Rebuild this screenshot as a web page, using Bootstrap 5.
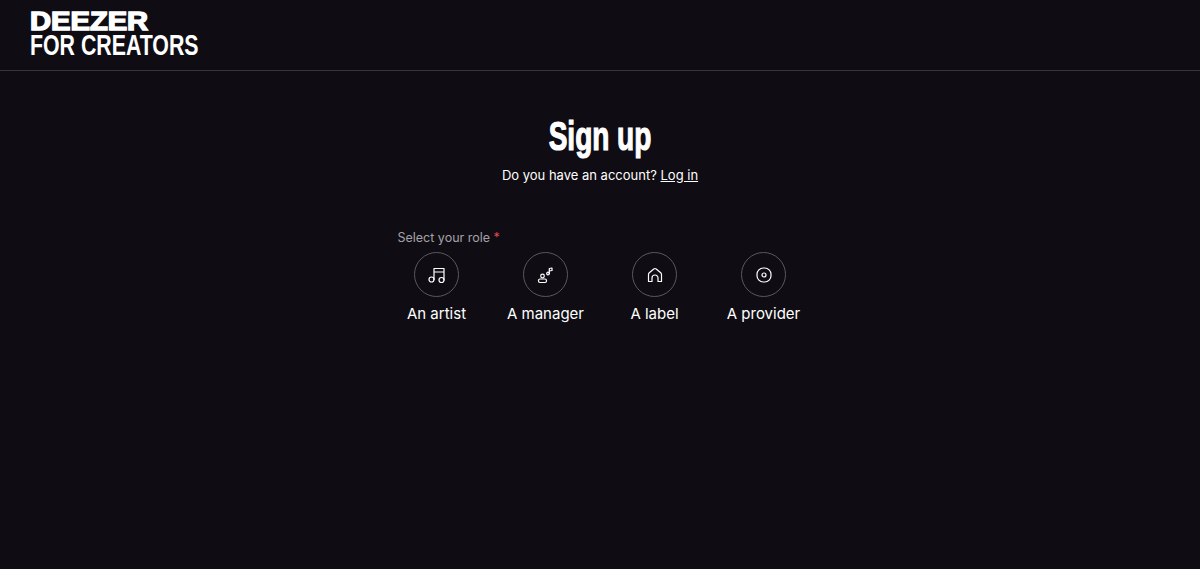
<!DOCTYPE html>
<html lang="en">
<head>
  <meta charset="UTF-8">
  <meta name="viewport" content="width=device-width, initial-scale=1.0">
  <title>Deezer for Creators - Sign up</title>
  <link href="https://cdn.jsdelivr.net/npm/bootstrap@5.3.3/dist/css/bootstrap.min.css" rel="stylesheet">
  <style>
    body {
      background: #0f0d13;
      color: #fff;
      font-family: Inter, "Liberation Sans", sans-serif;
      min-height: 569px;
    }
    .site-head {
      height: 71px;
      padding: 10px 30px 0;
      border-bottom: 1px solid #38363c;
    }
    .logo-top, .logo-bottom {
      display: block;
      width: fit-content;
      transform-origin: left top;
      white-space: nowrap;
      font-family: "Liberation Sans", sans-serif;
      font-weight: 700;
    }
    .logo-top {
      font-size: 25px;
      line-height: 23px;
      -webkit-text-stroke: 1.4px #fff;
      transform: scaleX(1.165);
    }
    .logo-bottom {
      font-size: 29px;
      line-height: 25px;
      transform: scaleX(0.735);
    }
    .page-title {
      font-family: "Liberation Sans", sans-serif;
      font-weight: 700;
      font-size: 40px;
      line-height: 48px;
      margin: 41px 0 0;
      -webkit-text-stroke: 1.2px #fff;
      transform: scaleX(0.7);
    }
    .account-line {
      font-size: 13px;
      line-height: 20px;
      margin: 5px 0 0;
    }
    .account-line a { color: #fff; }
    .role-form {
      width: 407px;
      margin: 44px auto 0;
    }
    .role-label {
      font-size: 12.500px;
      line-height: 18px;
      color: #a3a1a7;
      margin-bottom: 5px;
      padding-left: 1px;
    }
    .role-label span { color: #e5484d; }
    .role-list { gap: 29px; }
    .role-item {
      width: 80px;
      background: none;
      border: 0;
      padding: 0;
      color: #fff;
      font-size: 15px;
      line-height: 20px;
      white-space: nowrap;
    }
    .role-circle {
      width: 45px;
      height: 45px;
      border: 1px solid #5a585e;
      border-radius: 50%;
      margin-bottom: 7px;
    }
    .role-circle svg {
      width: 18px;
      height: 18px;
      fill: none;
      stroke: #fff;
      stroke-width: 1.200;
      stroke-linecap: round;
      stroke-linejoin: round;
    }
  </style>
</head>
<body>

<header class="site-head">
  <span class="logo-top">DEEZER</span>
  <span class="logo-bottom">FOR CREATORS</span>
</header>

<main class="text-center">
  <h1 class="page-title">Sign up</h1>
  <p class="account-line">Do you have an account? <a href="#">Log in</a></p>

  <div class="role-form text-start">
    <div class="role-label">Select your role <span>*</span></div>
    <div class="d-flex role-list">
      <button class="role-item d-flex flex-column align-items-center" type="button">
        <span class="role-circle d-flex align-items-center justify-content-center">
          <svg viewBox="0 0 18 18"><circle cx="3.500" cy="13.500" r="2.500"/><circle cx="13.500" cy="14" r="2.500"/><path d="M6 13.500V2.500h10v11.500M6 6h10"/></svg>
        </span>
        An artist
      </button>
      <button class="role-item d-flex flex-column align-items-center" type="button">
        <span class="role-circle d-flex align-items-center justify-content-center">
          <svg viewBox="0 0 18 18"><circle cx="5.500" cy="10" r="1.800"/><rect x="1.500" y="13" width="8" height="3.500" rx="1.500"/><circle cx="11" cy="7.500" r="1.300"/><path d="M12.300 7.500V2.500l2.700-.5v2.500l-2.700.5"/></svg>
        </span>
        A manager
      </button>
      <button class="role-item d-flex flex-column align-items-center" type="button">
        <span class="role-circle d-flex align-items-center justify-content-center">
          <svg viewBox="0 0 18 18"><path d="M2.500 15.500V8.500q0-1 .8-1.700l4.500-3.800q1.200-1 2.400 0l4.500 3.800q.8.700.8 1.700v7h-3.500V12a3 3 0 0 0-6 0v3.500z"/></svg>
        </span>
        A label
      </button>
      <button class="role-item d-flex flex-column align-items-center" type="button">
        <span class="role-circle d-flex align-items-center justify-content-center">
          <svg viewBox="0 0 18 18"><rect x="2" y="2" width="14" height="14" rx="6.300"/><circle cx="9" cy="9" r="2"/></svg>
        </span>
        A provider
      </button>
    </div>
  </div>
</main>

<script src="https://cdn.jsdelivr.net/npm/bootstrap@5.3.3/dist/js/bootstrap.bundle.min.js"></script>
</body>
</html>
